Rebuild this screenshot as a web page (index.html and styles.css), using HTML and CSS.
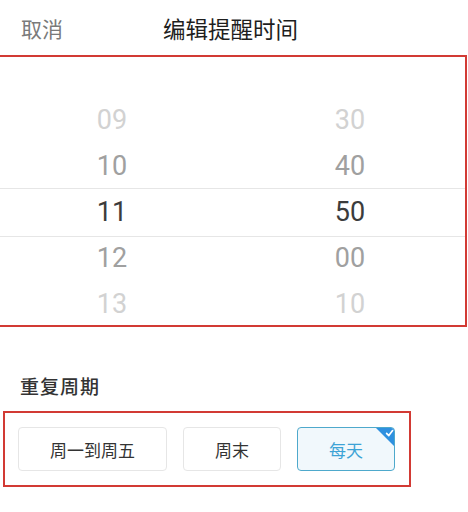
FILE: index.html
```html
<!DOCTYPE html>
<html lang="zh">
<head>
<meta charset="utf-8">
<link rel="stylesheet" href="styles.css">
</head>
<body>
<div class="page">
  <header class="topbar">
    <span class="cancel">取消</span>
    <span class="title">编辑提醒时间</span>
  </header>
  <section class="picker">
    <div class="sel-band"></div>
    <div class="col">
      <div class="row far">09</div>
      <div class="row near">10</div>
      <div class="row cur">11</div>
      <div class="row near">12</div>
      <div class="row far">13</div>
    </div>
    <div class="col">
      <div class="row far">30</div>
      <div class="row near">40</div>
      <div class="row cur">50</div>
      <div class="row near">00</div>
      <div class="row far">10</div>
    </div>
  </section>
  <h2 class="sec-title">重复周期</h2>
  <div class="options">
    <div class="opt">周一到周五</div>
    <div class="opt">周末</div>
    <div class="opt active">每天
      <span class="corner">
        <svg viewBox="0 0 20 20" width="20" height="20"><polygon points="0,0 20,0 20,20" fill="#2f90df"/><path d="M11.6 6.4 L13.8 8.6 L17.6 3.6" fill="none" stroke="#fff" stroke-width="1.7" stroke-linecap="round" stroke-linejoin="round"/></svg>
      </span>
    </div>
  </div>
</div>
</body>
</html>
```
FILE: styles.css
```css
html, body {
  margin: 0;
  padding: 0;
  background: #fff;
  overflow: hidden;
}
body {
  font-family: "Noto Sans CJK SC", "Noto Sans", sans-serif;
  width: 468px;
  height: 512px;
}
.page {
  display: flex;
  flex-direction: column;
  align-items: flex-start;
}
.topbar {
  height: 55px;
  box-sizing: border-box;
  padding: 2px 0 0 21px;
  display: flex;
  align-items: center;
  gap: 100px;
  width: 100%;
}
.cancel {
  font-size: 21px;
  color: #7a7a7a;
  line-height: 1;
}
.title {
  font-size: 22.5px;
  color: #1e1e1e;
  line-height: 1;
}
.picker {
  position: relative;
  margin-left: -4px;
  width: 471px;
  height: 272px;
  box-sizing: border-box;
  border: 2px solid #d23a34;
  padding-top: 40px;
  display: grid;
  grid-template-columns: 228px 248px;
  overflow: hidden;
  font-family: Roboto, "Noto Sans CJK SC", sans-serif;
}
.sel-band {
  position: absolute;
  left: 0;
  right: 0;
  top: 131px;
  height: 47px;
  border-top: 1px solid #e6e6e6;
  border-bottom: 1px solid #e6e6e6;
}
.col {
  display: flex;
  flex-direction: column;
  align-items: center;
}
.row {
  height: 46px;
  line-height: 46px;
  font-size: 27px;
}
.row.far { color: #d2d2d2; }
.row.near { color: #a0a0a0; }
.row.cur { color: #3c3c3c; }
.sec-title {
  margin: 45px 0 0 20px;
  font-size: 19px;
  font-weight: 500;
  color: #333;
  line-height: 28px;
  letter-spacing: 1px;
}
.options {
  margin: 11px 0 0 3px;
  border: 2px solid #d23a34;
  padding: 14px 14px 14px 13px;
  display: flex;
  gap: 16px;
}
.opt {
  position: relative;
  height: 44px;
  box-sizing: border-box;
  padding: 0 31px;
  border: 1px solid #e6e6e6;
  border-radius: 4px;
  display: flex;
  align-items: center;
  font-size: 17px;
  color: #333;
  overflow: hidden;
}
.opt.active {
  border-color: #4ea9cc;
  background: #f1f8fc;
  color: #3da3d6;
}
.corner {
  position: absolute;
  top: -1px;
  right: -1px;
  width: 20px;
  height: 20px;
  display: block;
}
.corner svg { display: block; }
```
